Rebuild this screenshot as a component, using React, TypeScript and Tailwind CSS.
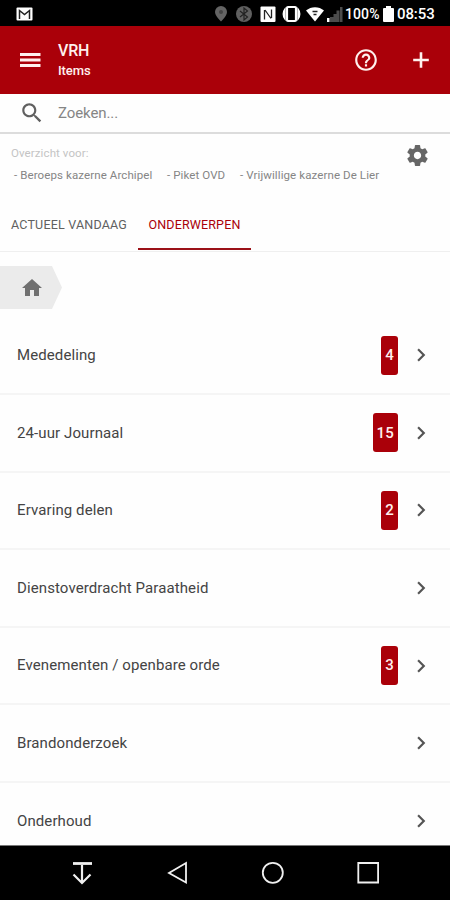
import { useState } from 'react';

const tabs = [
  { id: 'today', label: 'ACTUEEL VANDAAG', width: 'w-[138px]', text: 'tracking-[0.2px]' },
  { id: 'topics', label: 'ONDERWERPEN', width: 'w-[113px]', text: 'tracking-[0.15px]' },
];

const topics = [
  { name: 'Mededeling', count: 4 },
  { name: '24-uur Journaal', count: 15 },
  { name: 'Ervaring delen', count: 2 },
  { name: 'Dienstoverdracht Paraatheid', count: 0 },
  { name: 'Evenementen / openbare orde', count: 3 },
  { name: 'Brandonderzoek', count: 0 },
  { name: 'Onderhoud', count: 0 },
];

function Icon({ d, className }: { d: string; className: string }) {
  return (
    <svg viewBox="0 0 24 24" fill="currentColor" className={`shrink-0 ${className}`}>
      <path d={d} />
    </svg>
  );
}

function StatusBar() {
  return (
    <div className="h-[26px] shrink-0 bg-black text-white flex items-center pl-[16px] pr-[15px]">
      <svg viewBox="0 0 17 14" className="w-[17px] h-[14px] mt-px">
        <rect x="0.5" y="0.5" width="16" height="13" rx="1" fill="#fff" />
        <path d="M3.5 12V3.5L8.5 7.5L13.5 3.5V12" fill="none" stroke="#222" strokeWidth="1.5" />
      </svg>
      <svg viewBox="0 0 130 18" className="w-[130px] h-[18px] ml-auto mt-px">
        <path d="M8 1a6 6 0 0 0-6 6c0 4 6 9.500 6 9.500S14 11 14 7a6 6 0 0 0-6-6z" fill="#646464" />
        <circle cx="8" cy="7" r="2" fill="#444" />
        <circle cx="31" cy="9" r="8" fill="#606060" />
        <path d="M27 6l7.500 6-3.500 3V3l3.500 3L27 12" fill="none" stroke="#222" strokeWidth="1.200" />
        <rect x="47.500" y="1.500" width="15" height="15.500" rx="1" fill="#fff" />
        <path d="M51.500 14.500V5M52 5l6 8.500M58.500 4.500V13" fill="none" stroke="#222" strokeWidth="1.300" />
        <path d="M72 4a8 8 0 0 0 0 10zM85 4a8 8 0 0 1 0 10z" fill="#fff" stroke="#fff" strokeWidth="1.400" />
        <rect x="74" y="2" width="9" height="14" rx="1" fill="#000" stroke="#fff" strokeWidth="2.200" />
        <path d="M93 5.500C98 1 106 1 111 5.500L102 16.500z" fill="#fff" />
        <path d="M99.500 6.500h5M100.500 9.500h3" stroke="#222" strokeWidth="1.300" />
        <path d="M117 17v-5h3.500v5zM120.500 17V9h3v8zM123.500 17V5.500h3V17zM127 17V2h2.500v15z" fill="#4c4c4c" />
        <path d="M114 13h2.500v4H114z" fill="#fff" />
      </svg>
      <span className="ml-[2px] w-[36px] text-[14px] font-medium tracking-[0.1px] mt-[2px] whitespace-nowrap">100%</span>
      <svg viewBox="0 0 11 16" className="w-[11px] h-[16px] ml-[2px] mt-px">
        <path d="M3 0h5v2h2a1 1 0 0 1 1 1v12a1 1 0 0 1-1 1H1a1 1 0 0 1-1-1V3a1 1 0 0 1 1-1h2z" fill="#fff" />
      </svg>
      <span className="ml-[3px] w-[38px] text-[15px] font-medium tracking-[-0.1px] mt-[2px] whitespace-nowrap">08:53</span>
    </div>
  );
}

function AppHeader() {
  return (
    <header className="h-[68px] shrink-0 bg-[#aa0009] text-[#fff0ee] flex items-center pl-[18px] pr-[16px]">
      <button>
        <svg viewBox="0 0 24 24" className="w-6 h-6">
          <path d="M2 6.500h20.500M2 12h20.500M2 17.500h20.500" stroke="currentColor" strokeWidth="2.800" />
        </svg>
      </button>
      <div className="ml-[16px]">
        <h1 className="text-[16px] leading-[20px] font-medium tracking-[-0.2px]">VRH</h1>
        <p className="text-[13px] leading-[18px] pt-px font-medium tracking-[-0.1px]">Items</p>
      </div>
      <button className="ml-auto">
        <Icon
          className="w-[26px] h-[26px]"
          d="M11 18h2v-2h-2v2zm1-16C6.480 2 2 6.480 2 12s4.480 10 10 10 10-4.480 10-10S17.520 2 12 2zm0 18c-4.410 0-8-3.590-8-8s3.590-8 8-8 8 3.590 8 8-3.590 8-8 8zm0-14c-2.210 0-4 1.790-4 4h2c0-1.100.9-2 2-2s2 .9 2 2c0 2-3 1.750-3 5h2c0-2.250 3-2.500 3-5 0-2.210-1.790-4-4-4z"
        />
      </button>
      <button className="ml-[29px]">
        <Icon className="w-[26px] h-[26px]" d="M19.200 13.200h-6v6h-2.400v-6h-6v-2.400h6v-6h2.400v6h6v2.400z" />
      </button>
    </header>
  );
}

export default function App() {
  const [activeTab, setActiveTab] = useState('topics');

  return (
    <div className="w-[450px] h-[900px] overflow-hidden bg-[#fefefe] flex flex-col font-[Roboto,sans-serif]">
      <StatusBar />
      <AppHeader />

      <div className="h-[40px] shrink-0 border-b-2 border-[#dcdcdc] flex items-center pl-[19px]">
        <Icon
          className="w-[26px] h-[26px] text-[#606060]"
          d="M15.500 14h-.79l-.28-.27C15.410 12.590 16 11.110 16 9.500 16 5.910 13.090 3 9.500 3S3 5.910 3 9.500 5.910 16 9.500 16c1.610 0 3.090-.59 4.230-1.570l.27.28v.79l5 4.990L20.490 19l-4.990-5zm-6 0C7.010 14 5 11.990 5 9.500S7.010 5 9.500 5 14 7.010 14 9.500 11.990 14 9.500 14z"
        />
        <input
          type="text"
          placeholder="Zoeken..."
          className="ml-[13px] w-[300px] text-[15px] tracking-[-0.1px] placeholder:text-[#858585] focus:outline-none"
        />
      </div>

      <section className="h-[66px] shrink-0 pl-[11px] pr-[20px] pt-[10px] flex justify-between">
        <div className="whitespace-nowrap">
          <p className="text-[11.500px] leading-[18px] tracking-[0.1px] text-[#c4c4c4]">Overzicht voor:</p>
          <div className="flex pl-[3px] mt-[4px] text-[11.500px] leading-[18px] tracking-[0.1px] text-[#858585]">
            <span className="w-[153px]">- Beroeps kazerne Archipel</span>
            <span className="w-[73px]">- Piket OVD</span>
            <span>- Vrijwillige kazerne De Lier</span>
          </div>
        </div>
        <Icon
          className="w-[25px] h-[25px] -mt-[1.5px] text-[#666]"
          d="M19.430 12.980c.04-.32.07-.64.07-.98s-.03-.66-.07-.98l2.110-1.650c.19-.15.24-.42.12-.64l-2-3.460c-.12-.22-.39-.3-.61-.22l-2.490 1c-.52-.4-1.080-.73-1.690-.98l-.38-2.650C14.460 2.180 14.250 2 14 2h-4c-.25 0-.46.18-.49.42l-.38 2.650c-.61.25-1.170.59-1.690.98l-2.490-1c-.23-.09-.49 0-.61.22l-2 3.460c-.13.22-.07.49.12.64l2.110 1.650c-.04.32-.07.65-.07.98s.03.66.07.98l-2.110 1.650c-.19.15-.24.42-.12.64l2 3.460c.12.22.39.3.61.22l2.490-1c.52.4 1.080.73 1.690.98l.38 2.650c.03.24.24.42.49.42h4c.25 0 .46-.18.49-.42l.38-2.650c.61-.25 1.170-.59 1.690-.98l2.490 1c.23.09.49 0 .61-.22l2-3.460c.12-.22.07-.49-.12-.64l-2.110-1.650zM12 15.500c-1.930 0-3.500-1.570-3.500-3.500s1.570-3.500 3.500-3.500 3.500 1.570 3.500 3.500-1.570 3.500-3.500 3.500z"
        />
      </section>

      <nav className="h-[52px] shrink-0 border-b border-[#efefef] flex">
        {tabs.map((tab) => (
          <button
            key={tab.id}
            onClick={() => setActiveTab(tab.id)}
            className={`h-[50px] pt-[2px] text-[12.500px] whitespace-nowrap border-b-2 ${tab.width} ${tab.text} ${
              activeTab === tab.id ? 'text-[#aa0009] border-[#9b1118]' : 'text-[#606060] border-transparent'
            }`}
          >
            {tab.label}
          </button>
        ))}
      </nav>

      <div className="h-[65.500px] shrink-0 pt-[14px]">
        <div className="w-[62px] h-[43px] bg-[#ebebeb] flex items-center pl-[20px] [clip-path:polygon(0_0,52px_0,100%_50%,52px_100%,0_100%)]">
          <Icon className="w-6 h-6 text-[#707070]" d="M10 20v-6h4v6h5v-8h3L12 3 2 12h3v8z" />
        </div>
      </div>

      <main className="flex-1 min-h-0 overflow-hidden">
        {topics.map((topic) => (
          <div key={topic.name} className="h-[77.600px] border-b-2 border-[#f5f5f5] flex items-center pl-[17px] pr-[16px]">
            <span className="flex-1 text-[15px] tracking-[0.1px] text-[#444]">{topic.name}</span>
            {topic.count > 0 && (
              <span className="h-[39px] min-w-[17px] px-[4px] rounded-[3px] bg-[#aa0009] text-[#fff0ee] text-[15px] font-medium tracking-[0.2px] flex items-center justify-center">
                {topic.count}
              </span>
            )}
            <Icon
              className="ml-[10px] w-[26px] h-[26px] text-[#555]"
              d="M8.590 16.590 13.170 12 8.590 7.410 10 6l6 6-6 6-1.410-1.410z"
            />
          </div>
        ))}
      </main>

      <footer className="h-[55px] shrink-0 bg-black border-t border-[#777]">
        <svg viewBox="0 0 450 54" className="w-[450px] h-[54px]" fill="none" stroke="#f0f0f0" strokeWidth="1.800">
          <path d="M73 17.500h19" strokeWidth="2.800" />
          <path d="M82 19v17M73.500 28.500l8.500 8.500 8.500-8.500" strokeWidth="2.200" />
          <path d="M186 17v19.500L169 27z" />
          <circle cx="272.800" cy="26.800" r="10" />
          <path d="M358.300 17h19.800v19.500h-19.800z" />
        </svg>
      </footer>
    </div>
  );
}
